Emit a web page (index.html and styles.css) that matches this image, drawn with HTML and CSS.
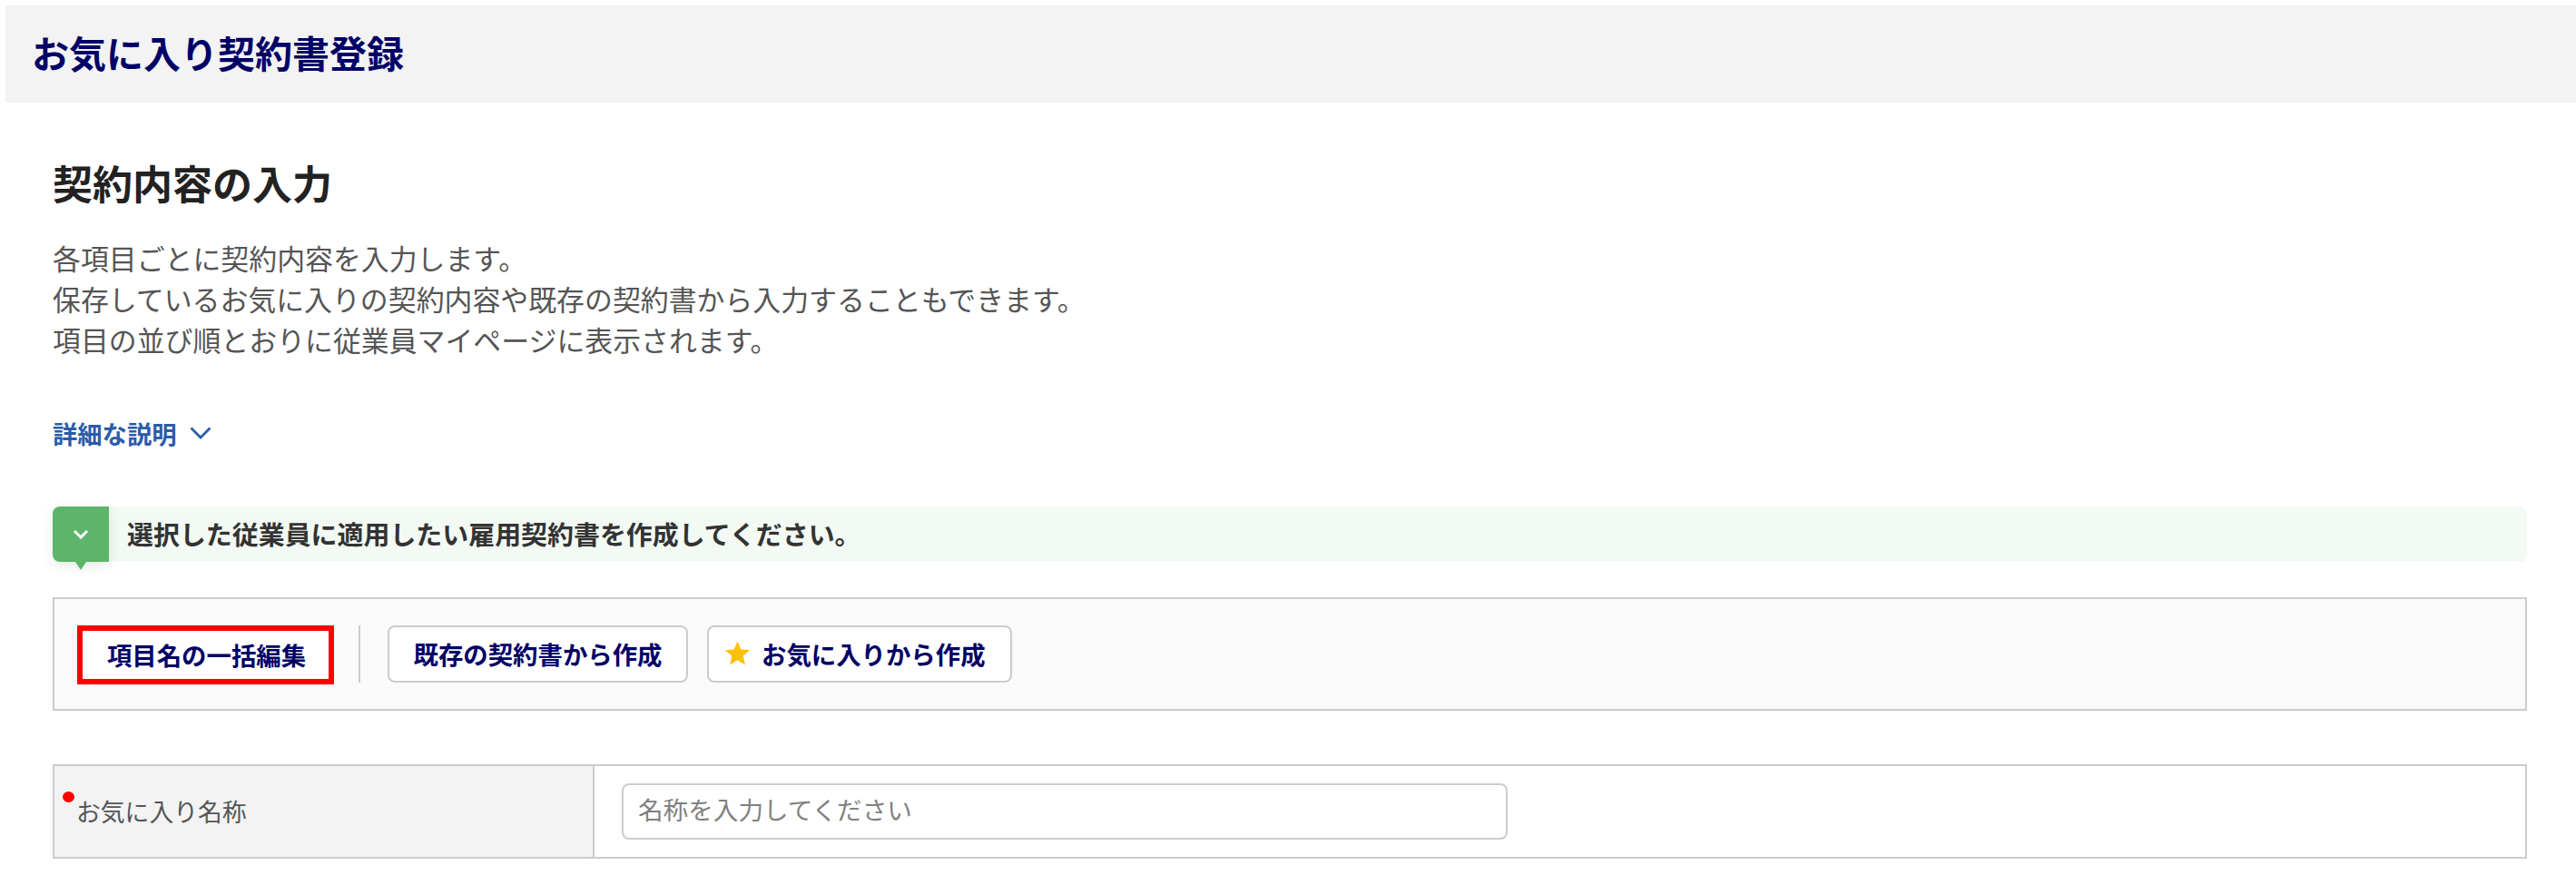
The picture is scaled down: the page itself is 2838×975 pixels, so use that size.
FILE: index.html
```html
<!DOCTYPE html>
<html lang="ja">
<head>
<meta charset="utf-8">
<title>お気に入り契約書登録</title>
<link rel="stylesheet" href="styles.css">
</head>
<body>
<header class="page-head"><h1 class="page-title">お気に入り契約書登録</h1></header>
<main class="content">
  <h2 class="section-title">契約内容の入力</h2>
  <p class="lead">各項目ごとに契約内容を入力します。<br>保存しているお気に入りの契約内容や既存の契約書から入力することもできます。<br>項目の並び順とおりに従業員マイページに表示されます。</p>
  <a class="more" href="#">詳細な説明
    <svg class="more-icon" viewBox="0 0 24 14" aria-hidden="true"><path d="M1.500 1.500 12 12 22.500 1.500" /></svg>
  </a>
  <div class="step">
    <div class="step-badge">
      <svg class="step-icon" viewBox="0 0 18 11" aria-hidden="true"><path d="M2 2l7 7 7-7" /></svg>
    </div>
    <p class="step-text">選択した従業員に適用したい雇用契約書を作成してください。</p>
  </div>
  <div class="toolbar">
    <button class="btn btn-highlight" type="button">項目名の一括編集</button>
    <span class="toolbar-sep"></span>
    <button class="btn btn-existing" type="button">既存の契約書から作成</button>
    <button class="btn btn-fav" type="button">
      <svg class="star" viewBox="0 0 24 24" aria-hidden="true"><path d="M12 .5l3.400 8 8.600.7-6.500 5.700 2 8.600L12 18.900l-7.500 4.600 2-8.600L0 9.200l8.600-.7z" /></svg>
      お気に入りから作成
    </button>
  </div>
  <div class="form-row">
    <div class="form-label"><span class="req"></span>お気に入り名称</div>
    <div class="form-field"><input class="text-input" type="text" placeholder="名称を入力してください"></div>
  </div>
</main>
</body>
</html>
```
FILE: styles.css
```css
* { box-sizing: border-box; }
html, body { margin: 0; background: #fff; }
body {
  padding-top: 6px;
  font-family: "Noto Sans CJK JP", "Noto Sans", sans-serif;
  color: #555;
}
.page-head {
  margin-left: 6px;
  height: 107px;
  background: #f3f3f3;
  display: flex;
  align-items: center;
  padding: 0 0 6px 29px;
}
.page-title {
  margin: 0;
  font-size: 41px;
  line-height: 50px;
  font-weight: 700;
  color: #000066;
}
.content { padding: 0 54px 0 58px; }
.section-title {
  margin: 66px 0 0;
  font-size: 44px;
  line-height: 44px;
  font-weight: 700;
  color: #222;
}
.lead {
  margin: 38px 0 0;
  font-size: 30.9px;
  line-height: 45px;
  color: #555;
}
.more {
  margin-top: 66px;
  display: flex;
  align-items: center;
  gap: 15px;
  font-size: 27.3px;
  line-height: 30px;
  font-weight: 700;
  color: #2a5caa;
  text-decoration: none;
}
.more-icon {
  width: 24px;
  height: 14px;
  fill: none;
  stroke: #2a5caa;
  stroke-width: 2.8;
}
.step {
  margin-top: 66px;
  height: 61px;
  display: flex;
  align-items: center;
  background: #f3faf4;
  border-radius: 8px;
}
.step-badge {
  position: relative;
  width: 62px;
  height: 61px;
  flex: none;
  display: flex;
  align-items: center;
  justify-content: center;
  background: #5cb56a;
  border-radius: 8px 0 0 8px;
  box-shadow: 0 4px 14px rgba(0, 0, 0, .1);
}
.step-badge::after {
  content: "";
  position: absolute;
  left: 25px;
  top: 61px;
  border-left: 6px solid transparent;
  border-right: 6px solid transparent;
  border-top: 9px solid #5cb56a;
}
.step-icon {
  width: 18px;
  height: 11px;
  fill: none;
  stroke: #fff;
  stroke-width: 3;
}
.step-text {
  margin: 0 0 4px 20px;
  font-size: 28.95px;
  line-height: 36px;
  font-weight: 700;
  color: #333;
}
.toolbar {
  margin-top: 39px;
  height: 125px;
  display: flex;
  align-items: flex-start;
  padding: 29px 0 0 25px;
  background: #fafafa;
  border: 2px solid #ccc;
}
.btn {
  height: 63px;
  padding: 0 0 2px;
  display: flex;
  align-items: center;
  justify-content: center;
  font: 700 27.4px/36px "Noto Sans CJK JP", "Noto Sans", sans-serif;
  color: #000066;
  background: #fff;
  border: 2px solid #ccc;
  border-radius: 8px;
}
.btn-highlight {
  width: 283px;
  height: 65px;
  padding-left: 2px;
  border: 6px solid #f00;
  border-radius: 0;
}
.toolbar-sep {
  width: 2px;
  height: 63px;
  margin: 0 30px 0 27px;
  background: #ccc;
}
.btn-existing { width: 331px; }
.btn-fav {
  width: 336px;
  margin-left: 21px;
  justify-content: flex-start;
  padding-left: 18px;
  gap: 13px;
}
.star {
  width: 27px;
  height: 27px;
  flex: none;
  fill: #ffc107;
}
.form-row {
  margin-top: 59px;
  height: 104px;
  display: flex;
  border: 2px solid #ccc;
}
.form-label {
  position: relative;
  width: 595px;
  flex: none;
  display: flex;
  align-items: center;
  padding: 0 0 2px 24px;
  font-size: 26.8px;
  color: #555;
  background: #f3f3f3;
  border-right: 2px solid #ccc;
}
.req {
  position: absolute;
  left: 9px;
  top: 28px;
  width: 13px;
  height: 12px;
  border-radius: 50%;
  background: #f00;
}
.form-field {
  flex: 1;
  padding: 19px 0 0 30px;
}
.text-input {
  display: block;
  width: 976px;
  height: 62px;
  padding: 0 16px 6px;
  font: 400 27.6px "Noto Sans CJK JP", "Noto Sans", sans-serif;
  color: #333;
  background: #fff;
  border: 2px solid #ccc;
  border-radius: 8px;
  outline: none;
}
.text-input::placeholder { color: #808080; opacity: 1; }
```
